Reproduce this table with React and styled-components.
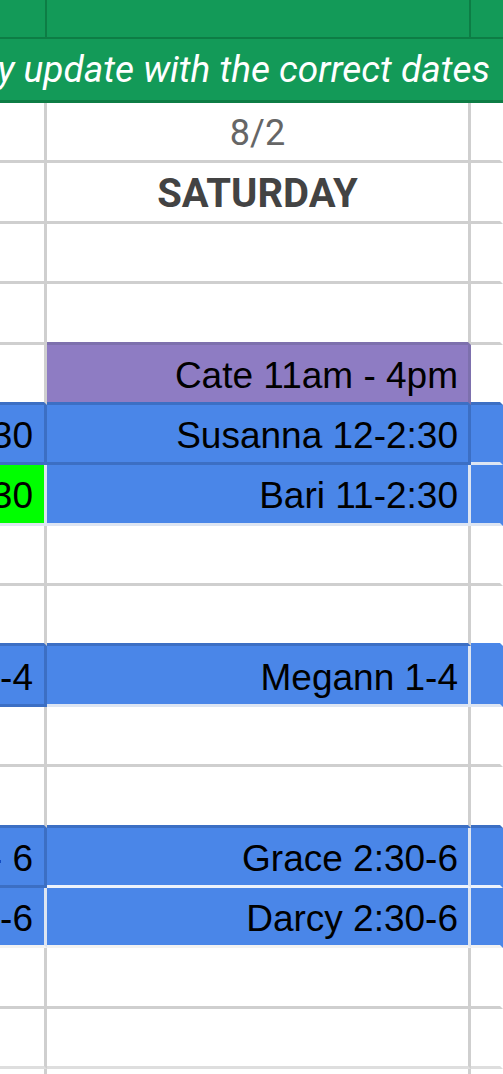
import React from 'react'
import styled, { createGlobalStyle } from 'styled-components'

const GRID = '#cfcfcf'
const GREEN = '#139a58'
const GREEN_LINE = '#0d7d45'
const BLUE = '#4a86e8'
const BLUE_LINE = '#3c6fc4'
const PALE_LINE = '#dde5f2'
const PURPLE = '#8e7cc3'
const PURPLE_LINE = '#7d70ad'
const LIME = '#00ff00'

const Global = createGlobalStyle`
  html, body { margin: 0; padding: 0; background: #fff; }
  body { font-family: 'Liberation Sans', Arial, sans-serif; }
`

const Sheet = styled.div`
  display: grid;
  grid-template-columns: 47px 424px 1fr;
  grid-template-rows: 39px 64px;
  grid-auto-rows: 60.375px;
  width: 503px;
  height: 1074px;
  overflow: hidden;
  background: #fff;
`

const StripCell = styled.div`
  box-sizing: border-box;
  background: ${GREEN};
  border-bottom: 2px solid ${GREEN_LINE};
  border-right: ${p => (p.$last ? 'none' : `2px solid ${GREEN_LINE}`)};
`

const Banner = styled.div`
  grid-column: 1 / -1;
  box-sizing: border-box;
  display: flex;
  align-items: center;
  justify-content: flex-end;
  padding: 0 13px 0 0;
  overflow: hidden;
  white-space: nowrap;
  background: ${GREEN};
  border-bottom: 3px solid ${GREEN_LINE};
  color: #fff;
  font-family: Roboto, 'Noto Sans', sans-serif;
  font-style: italic;
  font-size: 37px;
`

const Cell = styled.div`
  box-sizing: border-box;
  display: flex;
  align-items: center;
  justify-content: ${p => (p.$center ? 'center' : 'flex-end')};
  padding: ${p => (p.$center ? '0' : '5px 10px 0 0')};
  overflow: hidden;
  white-space: nowrap;
  background: ${p => p.$bg || '#fff'};
  border-right: 3px solid ${p => p.$br || GRID};
  border-bottom: 3px solid ${p => p.$bb || GRID};
  color: #000;
  font-size: 37px;
`

const NarrowCell = styled(Cell)`
  padding-right: 11px;
`

const DateText = styled.span`
  font-family: Roboto, 'Noto Sans', sans-serif;
  font-size: 36px;
  color: #666;
  padding-top: 2px;
`

const DayText = styled.span`
  font-family: Roboto, 'Noto Sans', sans-serif;
  font-weight: 700;
  font-size: 40px;
  color: #434343;
  padding-top: 2px;
`

// each row: [left, middle, right]
const rows = [
  [{}, { date: '8/2' }, {}],
  [{}, { day: 'SATURDAY' }, {}],
  [{}, {}, {}],
  [{}, { bb: PURPLE_LINE }, {}],
  [{ bb: BLUE_LINE }, { text: 'Cate 11am - 4pm', bg: PURPLE, br: PURPLE_LINE, bb: BLUE_LINE }, { bb: BLUE_LINE }],
  [{ text: '30', bg: BLUE, br: BLUE_LINE, bb: BLUE_LINE }, { text: 'Susanna 12-2:30', bg: BLUE, br: BLUE_LINE, bb: BLUE_LINE }, { bg: BLUE, bb: PALE_LINE }],
  [{ text: '30', bg: LIME, br: PALE_LINE, bb: PALE_LINE }, { text: 'Bari 11-2:30', bg: BLUE, br: PALE_LINE, bb: PALE_LINE }, { bg: BLUE, bb: PALE_LINE }],
  [{}, {}, {}],
  [{ bb: BLUE_LINE }, { bb: BLUE_LINE }, { bb: BLUE }],
  [{ text: '-4', bg: BLUE, br: BLUE_LINE, bb: BLUE_LINE }, { text: 'Megann 1-4', bg: BLUE, br: PALE_LINE, bb: PALE_LINE }, { bg: BLUE, bb: PALE_LINE }],
  [{}, {}, {}],
  [{ bb: BLUE_LINE }, { bb: BLUE_LINE }, { bb: BLUE_LINE }],
  [{ text: '- 6', bg: BLUE, br: BLUE_LINE, bb: BLUE_LINE }, { text: 'Grace 2:30-6', bg: BLUE, br: PALE_LINE, bb: '#eef3fb' }, { bg: BLUE, bb: '#eef3fb' }],
  [{ text: '-6', bg: BLUE, br: PALE_LINE, bb: '#f2f2f2' }, { text: 'Darcy 2:30-6', bg: BLUE, br: PALE_LINE, bb: '#f2f2f2' }, { bg: BLUE, bb: '#f2f2f2' }],
  [{}, {}, {}],
  [{ bb: '#dedede' }, { bb: '#dedede' }, { bb: '#dedede' }],
  [{}, {}, {}],
]

const renderCell = (c, col, key) => {
  const props = { $bg: c.bg, $br: col === 2 ? 'transparent' : c.br, $bb: c.bb }
  if (c.date) return <Cell key={key} $center {...props}><DateText>{c.date}</DateText></Cell>
  if (c.day) return <Cell key={key} $center {...props}><DayText>{c.day}</DayText></Cell>
  if (col === 0) return <NarrowCell key={key} {...props}>{c.text}</NarrowCell>
  return <Cell key={key} {...props}>{c.text}</Cell>
}

export default function App() {
  return (
    <>
      <Global />
      <Sheet>
        <StripCell />
        <StripCell />
        <StripCell $last />
        <Banner>y update with the correct dates</Banner>
        {rows.map((row, r) => row.map((c, col) => renderCell(c, col, `${r}-${col}`)))}
      </Sheet>
    </>
  )
}
